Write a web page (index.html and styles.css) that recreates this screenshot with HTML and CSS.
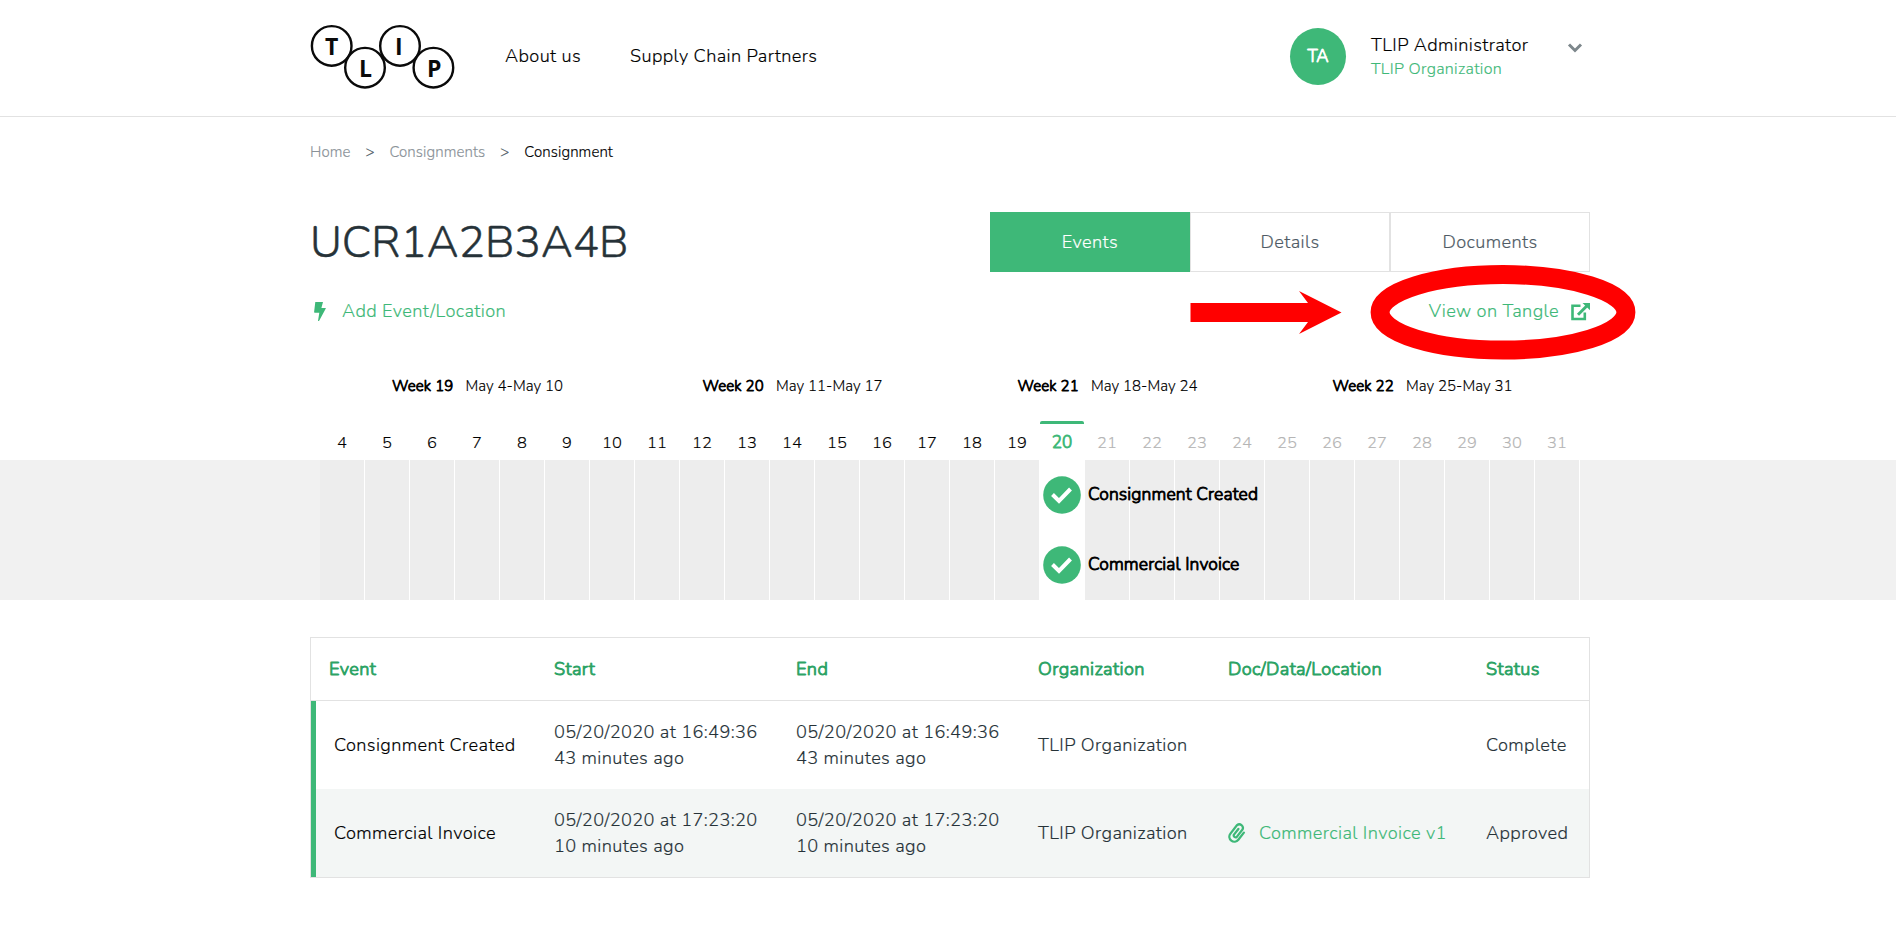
FILE: index.html
```html
<!DOCTYPE html>
<html lang="en">
<head>
<meta charset="utf-8">
<title>Consignment</title>
<link rel="stylesheet" href="styles.css">
</head>
<body>
<header class="header">
  <div class="container header-inner">
    <svg class="logo" width="146" height="66" viewBox="310 24 146 66">
      <g fill="#fff" stroke="#0a0a0a" stroke-width="2.4">
        <circle cx="331.7" cy="45.9" r="19.8"/>
        <circle cx="365" cy="67.7" r="19.8"/>
        <circle cx="400" cy="45.9" r="19.8"/>
        <circle cx="433.4" cy="67.7" r="19.8"/>
      </g>
      <g class="logo-letters">
        <text x="331.7" y="54.7">T</text>
        <text x="365.4" y="76.7">L</text>
        <text x="398.8" y="54.7">I</text>
        <text x="434.200" y="76.7">P</text>
      </g>
    </svg>
    <nav class="nav">
      <a>About us</a>
      <a>Supply Chain Partners</a>
    </nav>
    <div class="user">
      <div class="avatar">TA</div>
      <div class="user-info">
        <div>TLIP Administrator</div>
        <div class="user-org">TLIP Organization</div>
      </div>
      <svg class="chevron" width="16" height="12" viewBox="0 0 16 12"><path d="M2 2.5 8 8.500 14 2.500" fill="none" stroke="#7d878c" stroke-width="3"/></svg>
    </div>
  </div>
</header>

<main>
  <div class="container breadcrumb">
    <a>Home</a><span class="sep">&gt;</span><a>Consignments</a><span class="sep">&gt;</span><span class="current">Consignment</span>
  </div>

  <div class="container title-row">
    <h1 class="title">UCR1A2B3A4B</h1>
    <div class="tabs">
      <div class="tab active">Events</div>
      <div class="tab">Details</div>
      <div class="tab">Documents</div>
    </div>
  </div>

  <div class="container actions">
    <a class="action add">
      <svg width="12" height="19" viewBox="0 0 12 19"><path fill="#3eb878" d="M1.300 0H9L7.400 6H11.500Q12 6 11.800 6.500L5.300 18.500Q5 19 4.500 19H4L5.300 10.800H.8Q0 10.800.1 10Z"/></svg>
      <span>Add Event/Location</span>
    </a>
    <a class="action view">
      <span>View on Tangle</span>
      <svg width="19" height="18" viewBox="0 0 19 18"><path d="M9.500 2.700H1.500V16H13.800V9.500" fill="none" stroke="#3eb878" stroke-width="2.600"/><path d="M7 11.800 16 2.800" stroke="#3eb878" stroke-width="3"/><path d="M11.500 0H19V7.200Z" fill="#3eb878"/></svg>
    </a>
    <svg class="annotation" width="450" height="100" viewBox="1190 262 450 100">
      <path d="M1190.500 303H1308L1299 291 1341.500 312.500 1299 334 1308 322H1190.500Z" fill="#f00"/>
      <ellipse cx="1503" cy="312.300" rx="122.900" ry="37.700" fill="none" stroke="#f00" stroke-width="19"/>
    </svg>
  </div>

  <section class="timeline">
    <div class="weeks">
      <div><b>Week 19</b><span>May 4-May 10</span></div>
      <div><b>Week 20</b><span>May 11-May 17</span></div>
      <div><b>Week 21</b><span>May 18-May 24</span></div>
      <div><b>Week 22</b><span>May 25-May 31</span></div>
    </div>
    <div class="days">
      <div>4</div><div>5</div><div>6</div><div>7</div><div>8</div><div>9</div><div>10</div>
      <div>11</div><div>12</div><div>13</div><div>14</div><div>15</div><div>16</div><div>17</div>
      <div>18</div><div>19</div><div class="today">20</div><div class="future">21</div><div class="future">22</div><div class="future">23</div><div class="future">24</div>
      <div class="future">25</div><div class="future">26</div><div class="future">27</div><div class="future">28</div><div class="future">29</div><div class="future">30</div><div class="future">31</div>
    </div>
    <div class="band">
      <div class="columns">
        <i></i><i></i><i></i><i></i><i></i><i></i><i></i>
        <i></i><i></i><i></i><i></i><i></i><i></i><i></i>
        <i></i><i></i><i class="now"></i><i></i><i></i><i></i><i></i>
        <i></i><i></i><i></i><i></i><i></i><i></i><i></i>
        <div class="marks">
          <div class="mark"><svg width="38" height="38" viewBox="0 0 38 38"><circle cx="19" cy="19" r="18.800" fill="#3eb878"/><path d="M9.500 18.500 16 25 27.500 13" fill="none" stroke="#fff" stroke-width="4"/></svg><span>Consignment Created</span></div>
          <div class="mark"><svg width="38" height="38" viewBox="0 0 38 38"><circle cx="19" cy="19" r="18.800" fill="#3eb878"/><path d="M9.500 18.500 16 25 27.500 13" fill="none" stroke="#fff" stroke-width="4"/></svg><span>Commercial Invoice</span></div>
        </div>
      </div>
    </div>
  </section>

  <div class="container">
    <div class="table">
      <div class="row head">
        <div>Event</div><div>Start</div><div>End</div><div>Organization</div><div>Doc/Data/Location</div><div>Status</div>
      </div>
      <div class="row">
        <div class="event">Consignment Created</div>
        <div><p>05/20/2020 at 16:49:36</p><p>43 minutes ago</p></div>
        <div><p>05/20/2020 at 16:49:36</p><p>43 minutes ago</p></div>
        <div>TLIP Organization</div><div></div><div>Complete</div>
      </div>
      <div class="row alt">
        <div class="event">Commercial Invoice</div>
        <div><p>05/20/2020 at 17:23:20</p><p>10 minutes ago</p></div>
        <div><p>05/20/2020 at 17:23:20</p><p>10 minutes ago</p></div>
        <div>TLIP Organization</div>
        <div class="doc">
          <svg width="18" height="20" viewBox="0 0 18 20"><g transform="rotate(38 9 10)" fill="none" stroke="#3eb878" stroke-width="2.300" stroke-linecap="round"><path d="M14.200 5.500V14.500A5 5 0 0 1 4.200 14.500V3.800A3.600 3.600 0 0 1 11.200 3.800V13.500A2 2 0 0 1 7.600 13.500V6"/></g></svg>
          <span>Commercial Invoice v1</span>
        </div>
        <div>Approved</div>
      </div>
    </div>
  </div>
</main>
</body>
</html>
```
FILE: styles.css
```css
* { box-sizing: border-box; }
body { margin: 0; background: #fff; color: #000; font-family: Nunito, Lato, "Open Sans", sans-serif; font-size: 18.200px; letter-spacing: .38px; font-weight: 300; line-height: 26px; -webkit-text-stroke: .15px currentColor; overflow: hidden; }
p, h1 { margin: 0; }
.container { width: 1280px; margin: 0 auto 0 310px; }

.header { height: 117px; border-bottom: 1px solid #e2e2e2; }
.header-inner { display: flex; align-items: flex-start; padding-top: 24px; }
.logo { display: block; }
.logo-letters { font: 700 23px "Open Sans", sans-serif; letter-spacing: 0; text-anchor: middle; fill: #0a0a0a; -webkit-text-stroke: 0; }
.nav { display: flex; gap: 49px; padding: 19px 0 0 49px; }
.user { display: flex; margin-left: auto; padding: 4px 7px 0 0; }
.avatar { width: 56px; height: 57px; border-radius: 50%; background: #3eb878; color: #fff; font-size: 17px; -webkit-text-stroke: .9px currentColor; line-height: 57px; text-align: center; letter-spacing: 0; }
.user-info { width: 184px; margin-left: 25px; padding-top: 4px; }
.user-org { margin-top: -1px; font-size: 16px; letter-spacing: .3px; line-height: 24px; color: #3eb878; }
.chevron { margin: 14px 0 0 12px; }

.breadcrumb { display: flex; height: 95px; padding-top: 22px; font-size: 15px; letter-spacing: .08px; color: #8a9298; }
.sep { width: 39px; text-align: center; color: #4f5b65; }
.current { color: #000; }

.title-row { display: flex; justify-content: space-between; height: 60px; }
.title { font-size: 44px; font-weight: 300; letter-spacing: 0; line-height: 62px; color: #263238; -webkit-text-stroke: .5px currentColor; }
.tabs { display: flex; }
.tab { width: 200px; border: 1px solid #e2e2e2; line-height: 58px; text-align: center; color: #4f5b65; }
.tab.active { background: #3eb878; border-color: #3eb878; color: #fff; }

.actions { position: relative; display: flex; justify-content: space-between; height: 99px; padding-top: 26px; color: #3eb878; }
.action { display: flex; height: 26px; }
.add { gap: 16px; padding-left: 4px; }
.add svg { margin-top: 4px; }
.view { gap: 12px; }
.view svg { margin-top: 5px; }
.annotation { position: absolute; left: 880px; top: -10px; }

.weeks { display: grid; grid-template-columns: repeat(4, 315px); height: 50px; padding-left: 320px; font-size: 15px; line-height: 30px; }
.weeks div { display: flex; justify-content: center; gap: 12px; letter-spacing: .04px; }
.weeks b { font-weight: 300; letter-spacing: .15px; -webkit-text-stroke: .8px currentColor; }
.days { display: grid; grid-template-columns: repeat(28, 45px); height: 39px; padding-left: 320px; font-size: 16.500px; letter-spacing: 0; line-height: 38px; text-align: center; }
.days div { padding-top: 3px; width: 44px; }
.days .today { padding-top: 0; border-top: 3px solid #3eb878; border-radius: 2px 2px 0 0; font-size: 17px; -webkit-text-stroke: .9px currentColor; color: #3eb878; }
.days .future { color: #b5b5b5; }
.band { height: 140px; background: #f1f1f1; padding-left: 320px; }
.columns { position: relative; display: grid; grid-template-columns: repeat(28, 45px); height: 140px; }
.columns i { background: #ededed; border-right: 1px solid #fff; }
.columns .now { background: #fff; margin-left: -1px; }
.marks { position: absolute; left: 722.500px; top: 0; }
.mark { display: flex; align-items: center; gap: 7.500px; height: 70px; font-size: 17.500px; letter-spacing: .12px; -webkit-text-stroke: .9px currentColor; }
.mark span { margin-top: -2px; }

.table { margin-top: 37px; border: 1px solid #e2e2e2; }
.row { display: grid; grid-template-columns: 220px 242px 242px 190px 258px 1fr; align-items: center; height: 88px; padding-left: 18px; border-left: 5px solid #3eb878; color: #263238; }
.row.head { grid-template-columns: 225px 242px 242px 190px 258px 1fr; height: 63px; border-left: 0; border-bottom: 1px solid #e2e2e2; -webkit-text-stroke: .9px currentColor; color: #2ca365; }
.alt { background: #f3f6f5; }
.event { color: #000; }
.doc { display: flex; align-items: center; gap: 13px; color: #3eb878; }
```
